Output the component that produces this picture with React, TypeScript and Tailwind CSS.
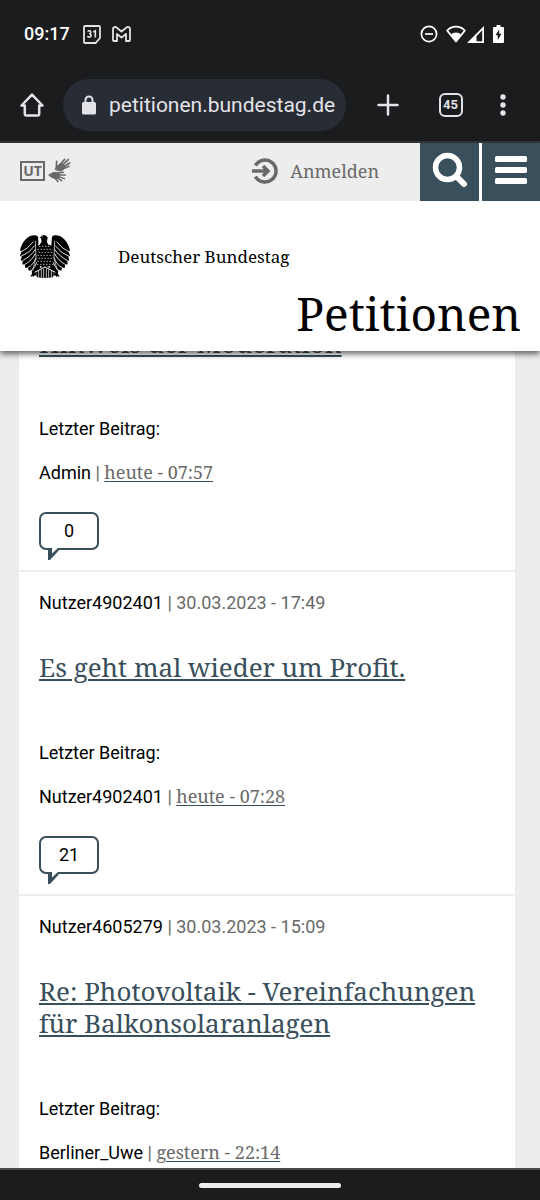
import type { ReactNode } from 'react'

type Post = {
  author?: string
  date?: string
  title: string
  lastAuthor: string
  lastDate: string
  replies?: number
}

const posts: Post[] = [
  { title: 'Hinweis der Moderation', lastAuthor: 'Admin', lastDate: 'heute - 07:57', replies: 0 },
  {
    author: 'Nutzer4902401',
    date: '30.03.2023 - 17:49',
    title: 'Es geht mal wieder um Profit.',
    lastAuthor: 'Nutzer4902401',
    lastDate: 'heute - 07:28',
    replies: 21,
  },
  {
    author: 'Nutzer4605279',
    date: '30.03.2023 - 15:09',
    title: 'Re: Photovoltaik - Vereinfachungen für Balkonsolaranlagen',
    lastAuthor: 'Berliner_Uwe',
    lastDate: 'gestern - 22:14',
  },
]

/* ── Status bar ── */
function StatusBar() {
  return (
    <div className="flex h-[68px] shrink-0 items-center pl-6 pr-9 text-white">
      <span className="text-[18px] leading-6 font-medium">09:17</span>
      <svg className="ml-[13px]" width="18" height="19" viewBox="0 0 18 19" fill="none" stroke="#e4e4e6" strokeWidth="1.8">
        <path d="M2 1h14q1 0 1 1v11l-4.500 5H2q-1 0-1-1V2q0-1 1-1z" />
        <path d="M4.800 6.600c.7-1.300 3.200-1 3 .7-.1 1.200-1 1.500-1.700 1.500 1 0 2.100.5 2 1.800-.2 1.800-2.900 2-3.600.4M10.300 7l2-1.200v6.700" strokeWidth="1.600" />
      </svg>
      <svg className="ml-[11px]" width="19" height="16" viewBox="0 0 19 16" fill="none" stroke="#e4e4e6" strokeWidth="1.8" strokeLinejoin="round">
        <path d="M1 3.200C1 1 3 .4 4.500 1.500l5 4 5-4C16 .4 18 1 18 3.200V14q0 1-1 1h-3V8l-4.500 3.600L5 8v7H2q-1 0-1-1z" />
      </svg>
      <div className="ml-auto flex items-center">
        <svg width="18" height="18" viewBox="0 0 18 18" fill="none" stroke="#fff" strokeWidth="1.7">
          <circle cx="9" cy="9" r="7.600" />
          <path d="M5 9h8" />
        </svg>
        <svg className="ml-2" width="20" height="18" viewBox="0 0 20 18">
          <path d="M1.200 5.600C6 .4 14 .4 18.800 5.600L10 16.500z" fill="none" stroke="#fff" strokeWidth="1.7" strokeLinejoin="round" />
          <path d="M4.500 9.500q5.500-4.200 11 0L10 17z" fill="#fff" />
        </svg>
        <svg className="ml-px" width="17" height="17" viewBox="0 0 17 17">
          <path d="M0 17L17 0v17z" fill="#fff" />
          <path d="M9.500 10.300l5.700-6v11H9.500z" fill="#1b1c1e" />
        </svg>
        <svg className="ml-[9px]" width="11" height="18" viewBox="0 0 11 18">
          <path d="M3.500 0h4v2H10q1 0 1 1v14q0 1-1 1H1q-1 0-1-1V3q0-1 1-1h2.500z" fill="#fff" />
          <path d="M6.200 4.500v4.200h2.300L4.800 15v-4.800H2.500z" fill="#1b1c1e" />
        </svg>
      </div>
    </div>
  )
}

function ToolButton({ label, className, children }: { label: string; className: string; children: ReactNode }) {
  return (
    <button type="button" aria-label={label} className={`flex h-[52px] shrink-0 items-center justify-center ${className}`}>
      {children}
    </button>
  )
}

/* ── Browser toolbar ── */
function BrowserBar() {
  return (
    <div className="flex h-[75px] shrink-0 items-center border-b-2 border-[#343638] pr-4 text-[#e3e3e8]">
      <ToolButton label="Startseite" className="w-[63px]">
        <svg width="24" height="24" viewBox="0 0 24 24" fill="none" stroke="currentColor" strokeWidth="2.500" strokeLinejoin="round">
          <path d="M12 1.700L1.500 12.500h3.300V21q0 1.500 1.500 1.500h11.400q1.500 0 1.500-1.500v-8.500h3.300z" />
        </svg>
      </ToolButton>
      <div className="mr-[10px] flex h-[52px] min-w-0 flex-1 items-center rounded-full bg-[#282c34] pl-[18px]">
        <svg className="shrink-0" width="16" height="20" viewBox="0 0 16 20">
          <path d="M4.500 8V5a3.500 3.500 0 0 1 7 0v3" fill="none" stroke="currentColor" strokeWidth="2" />
          <rect x="1" y="7" width="14" height="12.500" rx="1.600" fill="currentColor" />
        </svg>
        <input
          aria-label="Adresse"
          readOnly
          value="petitionen.bundestag.de"
          className="ml-3 min-w-0 flex-1 bg-transparent text-[21px] leading-7 outline-none"
        />
      </div>
      <ToolButton label="Neuer Tab" className="w-[63px]">
        <svg width="22" height="22" viewBox="0 0 22 22" stroke="currentColor" strokeWidth="2.500" strokeLinecap="round">
          <path d="M11 1.500v19M1.500 11h19" />
        </svg>
      </ToolButton>
      <ToolButton label="Tabs" className="w-[63px]">
        <span className="flex size-6 items-center justify-center rounded-md border-2 border-[#e3e3e8] text-[13px] leading-4 font-bold">45</span>
      </ToolButton>
      <ToolButton label="Menü" className="w-[42px]">
        <svg width="6" height="22" viewBox="0 0 6 22" fill="currentColor">
          <circle cx="3" cy="3" r="2.700" />
          <circle cx="3" cy="11" r="2.700" />
          <circle cx="3" cy="19" r="2.700" />
        </svg>
      </ToolButton>
    </div>
  )
}

function SignHands() {
  return (
    <svg width="23" height="25" viewBox="0 0 69 75" fill="#696969" stroke="#696969" strokeLinecap="round" strokeLinejoin="round">
      <path d="M22 34l5-10 12-8 12 7-3 10-10 6z" strokeWidth="3" />
      <path d="M25 30l1-20M36 20L50 4M42 22L61 5M45 27l20-12M44 33l19-8" fill="none" strokeWidth="5" />
      <path d="M3 51l14-7 14 1 4 9-9 8-14-4z" strokeWidth="4" />
      <path d="M24 46l22-3M30 51h22M29 55l20 7M25 58l16 10M20 59l10 12" fill="none" strokeWidth="4.500" />
    </svg>
  )
}

/* ── Grey service bar ── */
function ServiceBar() {
  return (
    <nav className="flex h-[58px] items-stretch bg-[#ededed] pl-[20px]">
      <a href="#ut" aria-label="Gebärdensprache und Untertitel" className="flex items-center gap-[3px] pb-[3px]">
        <span className="flex h-[20px] w-[25px] items-center justify-center border-2 border-[#696969] font-['Open_Sans'] text-[14px] leading-4 font-bold text-[#696969]">
          UT
        </span>
        <SignHands />
      </a>
      <a href="#anmelden" className="ml-auto mr-[41px] flex items-center gap-[11px] pb-[3px] text-[#696969]">
        <svg width="28" height="28" viewBox="0 0 28 28" fill="none" stroke="currentColor" strokeWidth="3.500">
          <path d="M4.500 8.500a11 11 0 1 1 0 11" />
          <path d="M1 14h16M12 9l5 5-5 5" />
        </svg>
        <span className="font-['Noto_Serif','DejaVu_Serif',serif] text-[18px] leading-6">Anmelden</span>
      </a>
      <button type="button" aria-label="Suche" className="flex w-[59px] items-center justify-center bg-[#394f5c] pb-[4px]">
        <svg width="36" height="36" viewBox="0 0 36 36" fill="none" stroke="#fff">
          <circle cx="15.500" cy="15.500" r="12" strokeWidth="5.500" />
          <path d="M25 25l7 7" strokeWidth="6" strokeLinecap="round" />
        </svg>
      </button>
      <button type="button" aria-label="Menü" className="flex w-[61px] items-center justify-center border-l-3 border-white bg-[#394f5c] pb-[4px]">
        <svg width="32" height="28" viewBox="0 0 32 28" fill="#fff">
          <rect y="0" width="32" height="6" rx="1.500" />
          <rect y="11" width="32" height="6" rx="1.500" />
          <rect y="22" width="32" height="6" rx="1.500" />
        </svg>
      </button>
    </nav>
  )
}

const WING =
  'M54 5C48-1 34-1 24 7C12 15 4 30 0 46l4 4-4 12 5 4-3 10 6 2-1 10 8 1 0 9 9 0 2 9 9-2 1 12-6 8 9-2 1 4 4-6 6 2-2-9 12-14-4-70z'

function Eagle() {
  return (
    <svg width="50" height="43" viewBox="0 0 150 129" aria-label="Bundesadler">
      <path d={WING} />
      <path d={WING} transform="matrix(-1 0 0 1 150 0)" />
      {/* head and body */}
      <path d="M58 10l6-7 6-3 9 2 5 8-1 12 10 10 15 0-4 45 8 22-20-7-17 6-17-6-20 7 8-22-4-45 14-2 8-10-1-10-4-3z" />
      <path d="M57 10q6 2 5 11l-7 9M88 30l-5-9q-1-8 5-15" fill="none" stroke="#fff" strokeWidth="4" />
      <circle cx="67" cy="5" r="1.500" fill="#fff" />
      {/* feather gaps */}
      {['', 'matrix(-1 0 0 1 150 0)'].map((t) => (
        <g key={t} transform={t || undefined} fill="none" stroke="#fff" strokeWidth="2.600">
          <path d="M0 52Q23 43 40 20M3 64Q29 54 44 32M7 77Q33 64 46 43M13 89Q36 77 46 56M22 99Q42 88 48 68M33 107Q47 96 50 82" />
          <path d="M46 17l2 52-10 38" strokeWidth="2" />
        </g>
      ))}
      <path d="M58 34h36M53 43h46M56 52h40M53 61h46M56 70h40M53 79h46M52 88h48" stroke="#fff" strokeWidth="3" strokeDasharray="3 6" />
      {/* tail */}
      <path d="M47 103L75 94l28 9-4 24q-24 4-48 0z" />
      <path d="M44 112l31-16 31 16" fill="none" stroke="#fff" strokeWidth="3" />
      <path d="M56 108v20M64 104v24M71 101v28M79 101v28M86 104v24M94 108v20" stroke="#fff" strokeWidth="2.200" />
    </svg>
  )
}

function PageHeader() {
  return (
    <header className="relative z-10 shrink-0 bg-white shadow-[0_3px_6px_rgba(0,0,0,0.6)]">
      <ServiceBar />
      <div className="flex items-center gap-12 pt-[34px] pl-[20px]">
        <Eagle />
        <span className="font-['Noto_Serif','DejaVu_Serif',serif] text-[17px] leading-6 text-black">Deutscher Bundestag</span>
      </div>
      <h1 className="pt-[3px] pr-[19px] pb-[6px] text-right font-['Noto_Serif','DejaVu_Serif',serif] text-[46px] leading-[64px] text-black">
        Petitionen
      </h1>
    </header>
  )
}

function ReplyCount({ count }: { count: number }) {
  return (
    <div className="relative mt-7 flex h-[38px] w-[60px] items-center justify-center rounded-[7px] border-2 border-[#394f5c] text-[18px] leading-[22px]">
      {count}
      <svg className="absolute top-[34px] left-[7px]" width="14" height="12" viewBox="0 0 14 12">
        <path d="M0 0h13L2 12H0z" fill="#394f5c" />
        <path d="M4 0h6L4 5.500z" fill="#fff" />
      </svg>
    </div>
  )
}

function PostItem({ post }: { post: Post }) {
  return (
    <li className="border-b-2 border-[#ededed] px-5 pb-5 text-[18px] leading-[22px] text-black">
      {post.author && (
        <p className="mb-[37px] pt-5">
          {post.author} <span className="text-[#696969]">| {post.date}</span>
        </p>
      )}
      <h2 className="font-['Noto_Serif','DejaVu_Serif',serif] text-[26px] leading-8 text-[#394f5c]">
        <a href="#beitrag" className="underline decoration-2 underline-offset-2">
          {post.title}
        </a>
      </h2>
      <p className="mt-[59px]">Letzter Beitrag:</p>
      <p className="mt-[21px]">
        {post.lastAuthor} <span className="text-[#696969]">|</span>{' '}
        <a
          href="#letzter"
          className="font-['Noto_Serif','DejaVu_Serif',serif] text-[18px] text-[#696969] underline decoration-[#394f5c] decoration-1 underline-offset-2"
        >
          {post.lastDate}
        </a>
      </p>
      {post.replies !== undefined && <ReplyCount count={post.replies} />}
    </li>
  )
}

export default function App() {
  return (
    <div className="flex h-screen flex-col overflow-hidden bg-[#1b1c1e] font-['Roboto',sans-serif]">
      <StatusBar />
      <BrowserBar />
      <PageHeader />
      <main className="min-h-0 flex-1 overflow-hidden bg-[#ededed]">
        {/* list is scrolled a little under the header */}
        <ul className="-mt-6 mr-[25px] ml-[19px] bg-white">
          {posts.map((post) => (
            <PostItem key={post.title} post={post} />
          ))}
        </ul>
      </main>
      <footer className="flex h-8 shrink-0 items-center justify-center border-t-2 border-[#4a4b4d]">
        <div className="h-[5px] w-[142px] rounded-full bg-[#ededed]" />
      </footer>
    </div>
  )
}
